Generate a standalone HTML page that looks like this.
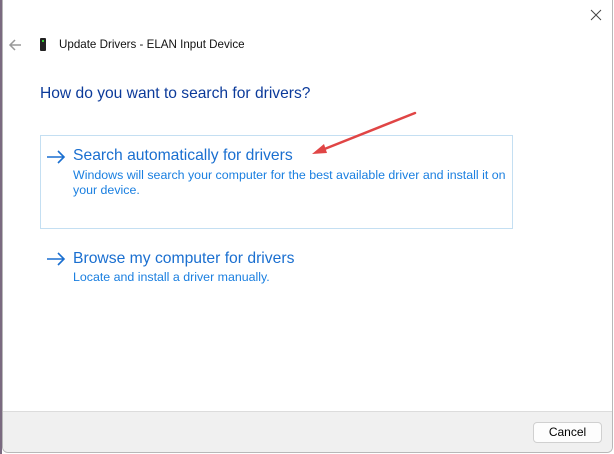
<!DOCTYPE html>
<html><head><style>
body{margin:0;width:614px;height:454px;overflow:hidden;background:#fff;font-family:"Liberation Sans",sans-serif;position:relative}
.win{position:absolute;left:2px;top:0;width:609px;height:452px;border:1px solid #b8b8b8;border-top:none;background:#fff;border-radius:0 0 6px 6px;overflow:hidden}
.t{position:absolute;white-space:nowrap}
.footer{position:absolute;left:0;right:0;top:411px;bottom:0;background:#f0f0f0;border-top:1px solid #dcdcdc}
.btn{position:absolute;left:530px;top:10px;width:67px;height:19px;border:1px solid #d0d0d0;border-radius:4px;background:#fdfdfd;font-size:12px;text-align:center;line-height:19px;color:#000}
</style></head><body>
<div style="position:absolute;left:0;top:0;width:2px;height:454px;background:#7a6a80"></div>
<div class="win">
<div style="position:absolute;left:37px;top:135px;width:471px;height:92px;border:1px solid #c4dff2"></div>
<div class="t" style="left:56px;top:38px;font-size:11.6px;color:#111">Update Drivers - ELAN Input Device</div>
<div class="t" style="left:37px;top:85px;font-size:15.6px;color:#0b3a9a">How do you want to search for drivers?</div>
<div class="t" style="left:70px;top:147px;font-size:15.7px;color:#1a6fd0">Search automatically for drivers</div>
<div class="t" style="left:70px;top:168px;font-size:12.4px;color:#1a7fe0;line-height:15px">Windows will search your computer for the best available driver and install it on<br>your device.</div>
<div class="t" style="left:70px;top:250px;font-size:15.7px;color:#1a6fd0">Browse my computer for drivers</div>
<div class="t" style="left:70px;top:270px;font-size:12.4px;color:#1a7fe0">Locate and install a driver manually.</div>
<div style="position:absolute;left:37px;top:38px;width:6px;height:13px;background:#222;border-radius:1px"></div>
<div style="position:absolute;left:39px;top:40px;width:2px;height:2px;background:#3c3"></div>
<div class="footer"><div class="btn">Cancel</div></div>
</div>
<svg style="position:absolute;left:0;top:0" width="614" height="454" fill="none">
<path d="M591 10L601 20M601 10L591 20" stroke="#444" stroke-width="1"/>
<path d="M21 45H10M15 40L10 45L15 50" stroke="#999" stroke-width="1.5"/>
<path d="M47 157H64M58 151L64 157L58 163" stroke="#1a6fd0" stroke-width="1.6"/>
<path d="M47 259H64M58 253L64 259L58 265" stroke="#1a6fd0" stroke-width="1.6"/>
<line x1="415" y1="113" x2="322" y2="150" stroke="#e04545" stroke-width="2.5" stroke-linecap="round"/><polygon points="312,154 324,144 327,153" fill="#e04545"/></svg>
</body></html>
